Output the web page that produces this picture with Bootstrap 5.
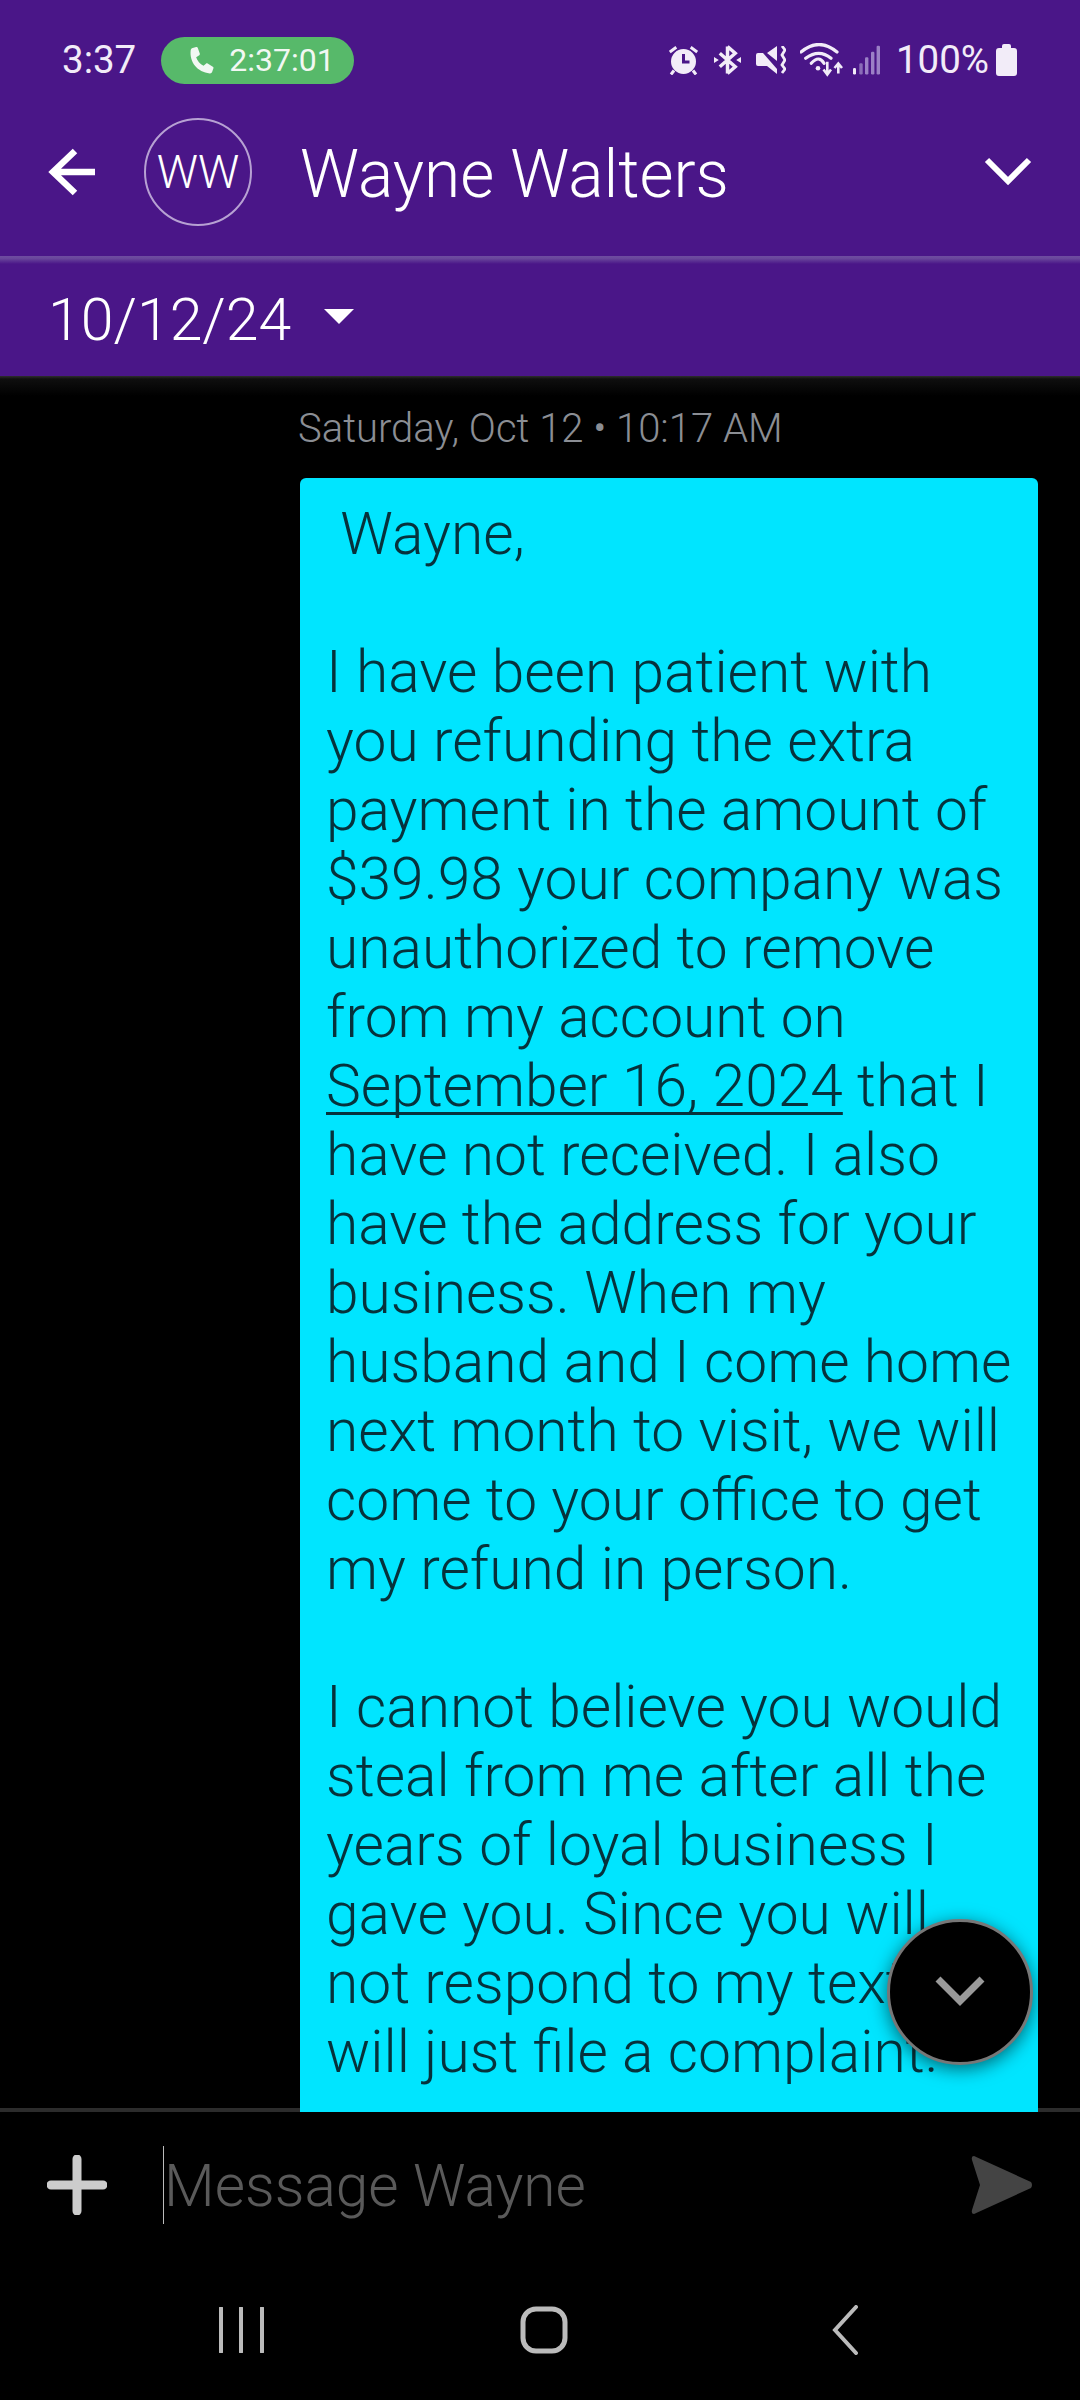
<!DOCTYPE html>
<html lang="en">
<head>
<meta charset="utf-8">
<title>Wayne Walters</title>
<link href="https://cdn.jsdelivr.net/npm/bootstrap@5.3.0/dist/css/bootstrap.min.css" rel="stylesheet">
<style>
html,body{margin:0;background:#000;}
.phone{width:1080px;height:2400px;background:#000;font-family:Roboto,"Liberation Sans",sans-serif;font-weight:300;color:#fff;}
.top-panel{background:#4a1688;flex:none;}
.status-row{height:120px;padding:0 63px 0 62px;}
.clock{font-size:38.5px;font-weight:400;color:#f2ecf8;line-height:1;}
.call-pill{width:193px;height:47px;margin-left:25px;background:#57b96a;gap:14px;font-size:32px;font-weight:400;color:#f2f8f3;line-height:1;padding-left:25px;}
.pct{font-size:38.5px;font-weight:400;color:#f2ecf8;line-height:1;}
.stat-icons svg{display:block;flex:none;}
.gap-bt{margin-left:16px;}
.gap-mute{margin-left:15px;}
.gap-wifi{margin-left:14px;}
.gap-sig{margin-left:9px;}
.gap-pct{margin-left:15px;}
.gap-bat{margin-left:7px;}
.app-row{height:104px;padding:0 48px;margin-bottom:32px;}
.avatar{width:108px;height:108px;border:2px solid #b7a1d3;margin-left:48px;font-size:46px;line-height:1;flex:none;}
.contact{font-size:65.8px;line-height:1;margin-left:48px;padding-top:5px;}
.divider-top{height:8px;background:linear-gradient(#6e4ca0,#6a479c 30%,#4a1688);}
.date-row{height:112px;padding:0 0 2px 48px;font-size:59px;line-height:1;}
.caret-shape{width:0;height:0;border-left:15px solid transparent;border-right:15px solid transparent;border-top:15px solid #fff;margin-left:33px;margin-top:-6px;}
.thread{flex:1 1 auto;min-height:0;background:linear-gradient(#000,#000) top/100% calc(100% - 4px) no-repeat,#2c2c2c;}
.top-shade{height:20px;background:linear-gradient(#2e2e2e,#0f0f0f 15%,#000);}
.stamp{margin-left:298px;margin-top:11px;font-size:40px;line-height:44px;color:#8b8e94;white-space:nowrap;}
.bubble{margin:27px 0 0 300px;width:738px;background:#00e5ff;color:#06323c;font-size:58.7px;line-height:69px;padding:22px 0 0 26px;border-radius:6px 6px 0 0;white-space:nowrap;min-height:1640px;}
.bubble u{text-decoration-skip-ink:none;text-decoration-thickness:3px;text-underline-offset:6px;}
.jump-btn{position:absolute;left:887px;top:1543px;width:146px;height:146px;background:#000;border:3px solid #777;box-shadow:0 4px 18px rgba(0,0,0,.55);}
.composer{height:288px;flex:none;background:#000;}
.input-row{height:146px;padding:0 0 0 47px;}
.caret-bar{width:1px;height:78px;background:#bbb;margin-left:56px;}
.placeholder-txt{font-size:58.6px;line-height:1;color:#5a5a5a;margin-left:0;padding-top:2px;}
.send-ic{margin-left:auto;margin-right:47px;}
.nav-row{height:142px;padding-top:2px;}
.nav-gap-a{width:219px;flex:none;}
.nav-gap-b{width:255px;flex:none;}
.nav-gap-c{width:264px;flex:none;}
</style>
</head>
<body>
<div class="phone d-flex flex-column overflow-hidden">
  <div class="top-panel">
    <div class="status-row d-flex align-items-center">
      <span class="clock">3:37</span>
      <span class="call-pill rounded-pill d-flex align-items-center">
        <svg width="29" height="29" viewBox="0 0 24 24"><path fill="#f2f8f3" d="M5.500 1.600 8.400.8c.6-.2 1.100.1 1.300.7l1.700 4.800c.2.500 0 1-.4 1.300L8.400 9.300c.9 2.900 3.200 5.700 6.100 7.100l2-1.800c.4-.3.900-.4 1.400-.1l4.300 2.600c.5.300.7.800.5 1.400l-1.100 3c-.3.800-1 1.300-1.900 1.200C9.500 21.700 2.600 13.500 3.900 3.400c.1-.8.800-1.500 1.600-1.800z"/></svg>
        <span>2:37:01</span>
      </span>
      <div class="stat-icons d-flex align-items-center ms-auto">
        <svg width="29" height="29" viewBox="0 0 29 29"><circle cx="14.500" cy="15.500" r="12.500" fill="#f2ecf8"/><path d="M14.500 8v8h6" fill="none" stroke="#4a1688" stroke-width="3"/><path d="M.8 6l6.500-4.800M28.200 6l-6.500-4.800M5 24.500l-3 4M24 24.500l3 4" stroke="#f2ecf8" stroke-width="3" fill="none"/></svg>
        <svg class="gap-bt" width="27" height="32" viewBox="0 0 28 32"><path d="M14 2l8 7-16 14M14 30l8-7L6 9M14 2v28" fill="none" stroke="#f2ecf8" stroke-width="3.600"/><path d="M0 13l5 3-5 3zM28 13l-5 3 5 3z" fill="#f2ecf8"/></svg>
        <svg class="gap-mute" width="30" height="28" viewBox="0 0 30 28"><path d="M0 9Q0 7 2 7H7L21 23V28L11 20H2Q0 20 0 18zM11 7 21 0V15z" fill="#f2ecf8"/><path d="M26 0l3 4-3 5 3 5-3 5 3 4-3 4" fill="none" stroke="#f2ecf8" stroke-width="2.800"/></svg>
        <svg class="gap-wifi" width="44" height="34" viewBox="0 0 44 34"><path d="M1 9Q19-6 37 9M5.700 15.300Q19 5.300 31 15.300M11.300 20.300Q19 11.700 24 20.300" fill="none" stroke="#f2ecf8" stroke-width="3.200" stroke-linecap="round"/><circle cx="18" cy="25.300" r="2.300" fill="#f2ecf8"/><path d="M27.300 18.700V31M23.500 26.500l3.800 5 3.700-5M38.300 30.500V21M34.500 25l3.800-4.500L42 25" fill="none" stroke="#f2ecf8" stroke-width="2.600"/></svg>
        <svg class="gap-sig" width="28" height="30" viewBox="0 0 28 30"><rect x="0" y="23" width="3" height="6.500" rx="1.200" fill="#f2ecf8"/><rect x="6.300" y="18.300" width="3.400" height="11.200" rx="1.200" fill="#8a6cb8"/><rect x="12" y="12.300" width="3.400" height="17.200" rx="1.200" fill="#9b80c6"/><rect x="18" y="6.700" width="3.400" height="22.800" rx="1.200" fill="#9b80c6"/><rect x="23.600" y=".7" width="3.400" height="28.800" rx="1.200" fill="#9b80c6"/></svg>
        <span class="pct gap-pct">100%</span>
        <svg class="gap-bat" width="21" height="32" viewBox="0 0 21 32"><path d="M6 2q0-2 2-2h5q2 0 2 2v2h3q3 0 3 3v22q0 3-3 3H3q-3 0-3-3V7q0-3 3-3h3z" fill="#f2ecf8"/></svg>
      </div>
    </div>
    <div class="app-row d-flex align-items-center">
      <svg width="48" height="48" viewBox="0 0 48 48"><path d="M47 24H6M27 3 5 24l22 21" fill="none" stroke="#fff" stroke-width="6.500"/></svg>
      <div class="avatar rounded-circle d-flex align-items-center justify-content-center">WW</div>
      <div class="contact">Wayne Walters</div>
      <svg class="ms-auto" width="48" height="30" viewBox="0 0 48 30"><path d="M3 3l21 21L45 3" fill="none" stroke="#fff" stroke-width="6"/></svg>
    </div>
    <div class="divider-top"></div>
    <div class="date-row d-flex align-items-center">
      <span>10/12/24</span><span class="caret-shape"></span>
    </div>
  </div>
  <div class="thread position-relative overflow-hidden">
    <div class="top-shade"></div>
    <div class="stamp">Saturday, Oct 12 • 10:17 AM</div>
    <div class="bubble">&nbsp;Wayne,<br><br>I have been patient with<br>you refunding the extra<br>payment in the amount of<br>$39.98 your company was<br>unauthorized to remove<br>from my account on<br><u>September 16, 2024</u> that I<br>have not received. I also<br>have the address for your<br>business. When my<br>husband and I come home<br>next month to visit, we will<br>come to your office to get<br>my refund in person.<br><br>I cannot believe you would<br>steal from me after all the<br>years of loyal business I<br>gave you. Since you will<br>not respond to my texts, I<br>will just file a complaint.</div>
    <button class="jump-btn rounded-circle p-0 d-flex align-items-center justify-content-center" type="button" aria-label="Scroll to bottom">
      <svg width="50" height="32" viewBox="0 0 50 32"><path d="M3 3l22 22L47 3" fill="none" stroke="#999" stroke-width="7"/></svg>
    </button>
  </div>
  <div class="composer">
    <div class="input-row d-flex align-items-center">
      <svg width="60" height="60" viewBox="0 0 60 60"><path d="M30 4v52M4 30h52" stroke="#ccc" stroke-width="9" stroke-linecap="round"/></svg>
      <span class="caret-bar"></span>
      <span class="placeholder-txt">Message Wayne</span>
      <svg class="send-ic" width="62" height="60" viewBox="0 0 62 60"><path d="M3 1l57 26q2 3 0 6L3 59q-3 0-2-4l8-25-8-25q-1-4 2-4z" fill="#444"/></svg>
    </div>
    <div class="nav-row d-flex align-items-center">
      <div class="nav-gap-a"></div>
      <svg width="46" height="46" viewBox="0 0 46 46"><path d="M2 1v44M22 1v44M43 1v44" stroke="#bbb" stroke-width="4" stroke-linecap="round"/></svg>
      <div class="nav-gap-b"></div>
      <svg width="48" height="48" viewBox="0 0 48 48"><rect x="3" y="3" width="42" height="42" rx="13" fill="none" stroke="#bbb" stroke-width="5"/></svg>
      <div class="nav-gap-c"></div>
      <svg width="26" height="50" viewBox="0 0 26 50"><path d="M24 2 3 25l21 23" fill="none" stroke="#bbb" stroke-width="4" stroke-linecap="round"/></svg>
    </div>
  </div>
</div>
</body>
</html>
